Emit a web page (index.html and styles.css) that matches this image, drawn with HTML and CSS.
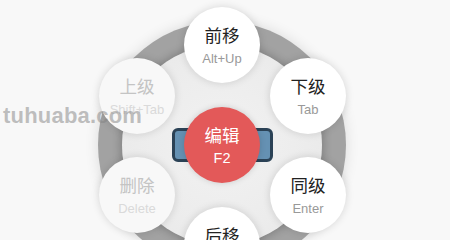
FILE: index.html
```html
<!DOCTYPE html>
<html>
<head>
<meta charset="utf-8">
<link rel="stylesheet" href="styles.css">
</head>
<body>
<div class="stage">
  <div class="ring"><div class="ring-inner"></div></div>
  <div class="node-box"></div>
  <div class="item center"><span class="label">编辑</span><span class="key">F2</span></div>
  <div class="item pos-top"><span class="label">前移</span><span class="key">Alt+Up</span></div>
  <div class="item pos-tr"><span class="label">下级</span><span class="key">Tab</span></div>
  <div class="item pos-br"><span class="label">同级</span><span class="key">Enter</span></div>
  <div class="item pos-bottom"><span class="label">后移</span><span class="key">Alt+Down</span></div>
  <div class="item pos-bl disabled"><span class="label">删除</span><span class="key">Delete</span></div>
  <div class="item pos-tl disabled"><span class="label">上级</span><span class="key">Shift+Tab</span></div>
  <div class="watermark">tuhuaba.com</div>
</div>
</body>
</html>
```

FILE: styles.css
```css
html, body {
  margin: 0;
  padding: 0;
  width: 450px;
  height: 240px;
  overflow: hidden;
  background: #f8f8f8;
}
.stage {
  position: relative;
  width: 450px;
  height: 240px;
  overflow: hidden;
  font-family: "Liberation Sans", "Noto Sans CJK SC", sans-serif;
}
.ring {
  position: absolute;
  left: 98px;
  top: 21px;
  width: 248px;
  height: 248px;
  border-radius: 50%;
  background: #a2a2a2;
  box-shadow: 0 0 14px rgba(0,0,0,0.12);
  display: flex;
  align-items: center;
  justify-content: center;
}
.ring-inner {
  width: 200px;
  height: 200px;
  border-radius: 50%;
  background: radial-gradient(circle, #f2f2f2 0%, #ececec 60%, #e6e6e6 100%);
  box-shadow: 0 0 8px 2px rgba(0,0,0,0.2);
}
.node-box {
  position: absolute;
  left: 172px;
  top: 128px;
  width: 95px;
  height: 28px;
  border: 3px solid #2b4256;
  border-radius: 6px;
  background: #6591b3;
}
.item {
  position: absolute;
  width: 76px;
  height: 76px;
  border-radius: 50%;
  background: #ffffff;
  box-shadow: 0 0 9px rgba(0,0,0,0.14);
  display: flex;
  flex-direction: column;
  align-items: center;
  justify-content: center;
  gap: 6px;
  padding-top: 1px;
  box-sizing: border-box;
}
.label {
  font-family: "Noto Sans CJK SC", sans-serif;
  font-size: 17.5px;
  line-height: 20px;
  color: #222;
}
.key {
  font-family: "Liberation Sans", sans-serif;
  font-size: 13px;
  line-height: 15px;
  color: #999;
}
.center {
  left: 184px;
  top: 107px;
  background: #e35959;
  box-shadow: 0 0 6px rgba(0,0,0,0.15);
}
.center .label, .center .key { color: #fff; }
.center .key { font-size: 14.5px; }
.pos-top { left: 184px; top: 7px; }
.pos-tr { left: 270px; top: 58px; }
.pos-br { left: 270px; top: 157px; }
.pos-bottom { left: 184px; top: 207px; }
.pos-bl { left: 99px; top: 157px; }
.pos-tl { left: 99px; top: 58px; }
.disabled { background: #f8f8f8; }
.disabled .label { color: #c4c4c4; }
.disabled .key { color: #dadada; }
.watermark {
  position: absolute;
  left: 3px;
  top: 103px;
  font-family: "Liberation Sans", sans-serif;
  font-weight: bold;
  font-size: 22px;
  letter-spacing: 0.2px;
  color: rgba(130,130,130,0.5);
}
```
